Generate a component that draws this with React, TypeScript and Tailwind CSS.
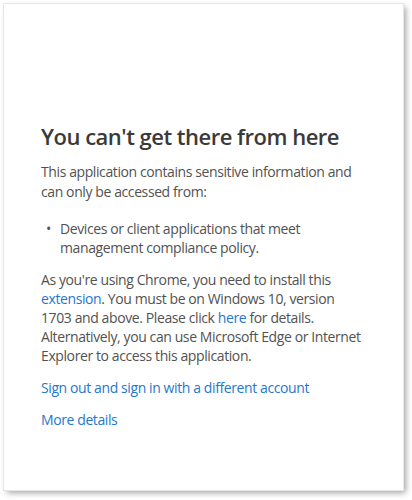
export default function App() {
  const link = 'text-[#2577cc]';

  return (
    <div className="min-h-[500px] w-[412px] bg-white pl-1 pt-1 font-['Open_Sans',sans-serif]">
      <div className="h-[486px] w-[399px] bg-white pl-[37px] pt-[118px] shadow-[3px_3px_6px_rgba(0,0,0,0.35)] outline outline-[#e6e6e6]">
        <div className="w-[340px]">
          <h1 className="text-[22px] font-semibold leading-[28px] tracking-[-0.5px] text-[#3a3a3a]">
            You can't get there from here
          </h1>

          <p className="mt-[12px] text-[14px] leading-[20px] tracking-[-0.4px] text-[#525252]">
            This application contains sensitive information and
            <br />
            can only be accessed from:
          </p>

          <ul className="mt-[17px] text-[14px] leading-[19px] tracking-[-0.4px] text-[#525252]">
            <li className="flex">
              <span className="w-[19px] shrink-0 pl-[5px]">•</span>
              <span>
                Devices or client applications that meet
                <br />
                management compliance policy.
              </span>
            </li>
          </ul>

          <p className="mt-[13px] text-[14px] leading-[19px] tracking-[-0.4px] text-[#525252]">
            As you're using Chrome, you need to install this
            <br />
            <a className={link}>extension</a>. You must be on Windows 10, version
            <br />
            1703 and above. Please click <a className={link}>here</a> for details.
            <br />
            Alternatively, you can use Microsoft Edge or Internet
            <br />
            Explorer to access this application.
          </p>

          <div className="mt-[13px] flex flex-col gap-[12px] text-[14px] leading-[20px] tracking-[-0.4px]">
            <a className={link}>Sign out and sign in with a different account</a>
            <a className={link}>More details</a>
          </div>
        </div>
      </div>
    </div>
  );
}
